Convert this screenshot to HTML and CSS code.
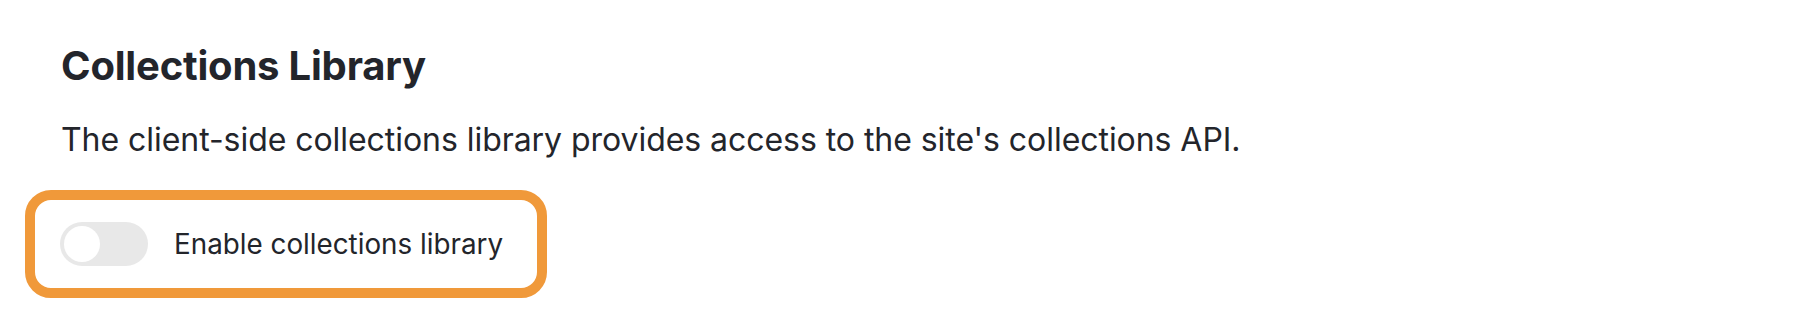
FILE: index.html
```html
<!DOCTYPE html>
<html lang="en">

<head>
	<meta charset="UTF-8">
	<meta name="viewport" content="width=device-width, initial-scale=1.0">
	<title>Collections Library</title>

	<link rel="stylesheet" href="styles.css">
</head>

<body>

	<section class="settings">
		<h2 class="settings-title">Collections Library</h2>
		<p class="settings-desc">The client-side collections library provides access to the site's collections API.</p>

		<!-- 강조 테두리 박스 -->
		<div class="highlight">
			<label class="toggle-row">
				<input type="checkbox" class="toggle-input">
				<span class="toggle"><span class="toggle-knob"></span></span>
				<span class="toggle-label">Enable collections library</span>
			</label>
		</div>
	</section>

</body>

</html>
```
FILE: styles.css
```css
* {
	padding: 0;
	margin: 0;
	box-sizing: border-box;
}

body {
	background: #fff;
	color: #23252b;
	font-family: Inter, "Noto Sans", sans-serif;
}

.settings {
	padding: 42px 25px 0;
}

.settings-title {
	padding-left: 36px;
	font-size: 40px;
	line-height: 48px;
	font-weight: 700;
	letter-spacing: -0.2px;
}

.settings-desc {
	margin-top: 26px;
	padding-left: 36px;
	font-size: 32px;
	line-height: 48px;
	letter-spacing: -0.05px;
}

/* 주황색 테두리 */
.highlight {
	margin-top: 26px;
	display: inline-block;
	border: 10px solid #f0993a;
	border-radius: 26px;
	padding: 20px 34px 20px 25px;
}

.toggle-row {
	display: flex;
	align-items: center;
	gap: 26px;
	cursor: pointer;
}

.toggle-input {
	display: none;
}

.toggle {
	width: 88px;
	height: 44px;
	border-radius: 22px;
	background: #e8e8e8;
	padding: 4px;
	display: flex;
}

.toggle-knob {
	width: 36px;
	height: 36px;
	border-radius: 50%;
	background: #fff;
}

.toggle-input:checked + .toggle {
	background: #f0993a;
	justify-content: flex-end;
}

.toggle-label {
	font-size: 27.8px;
	line-height: 48px;
}
```
